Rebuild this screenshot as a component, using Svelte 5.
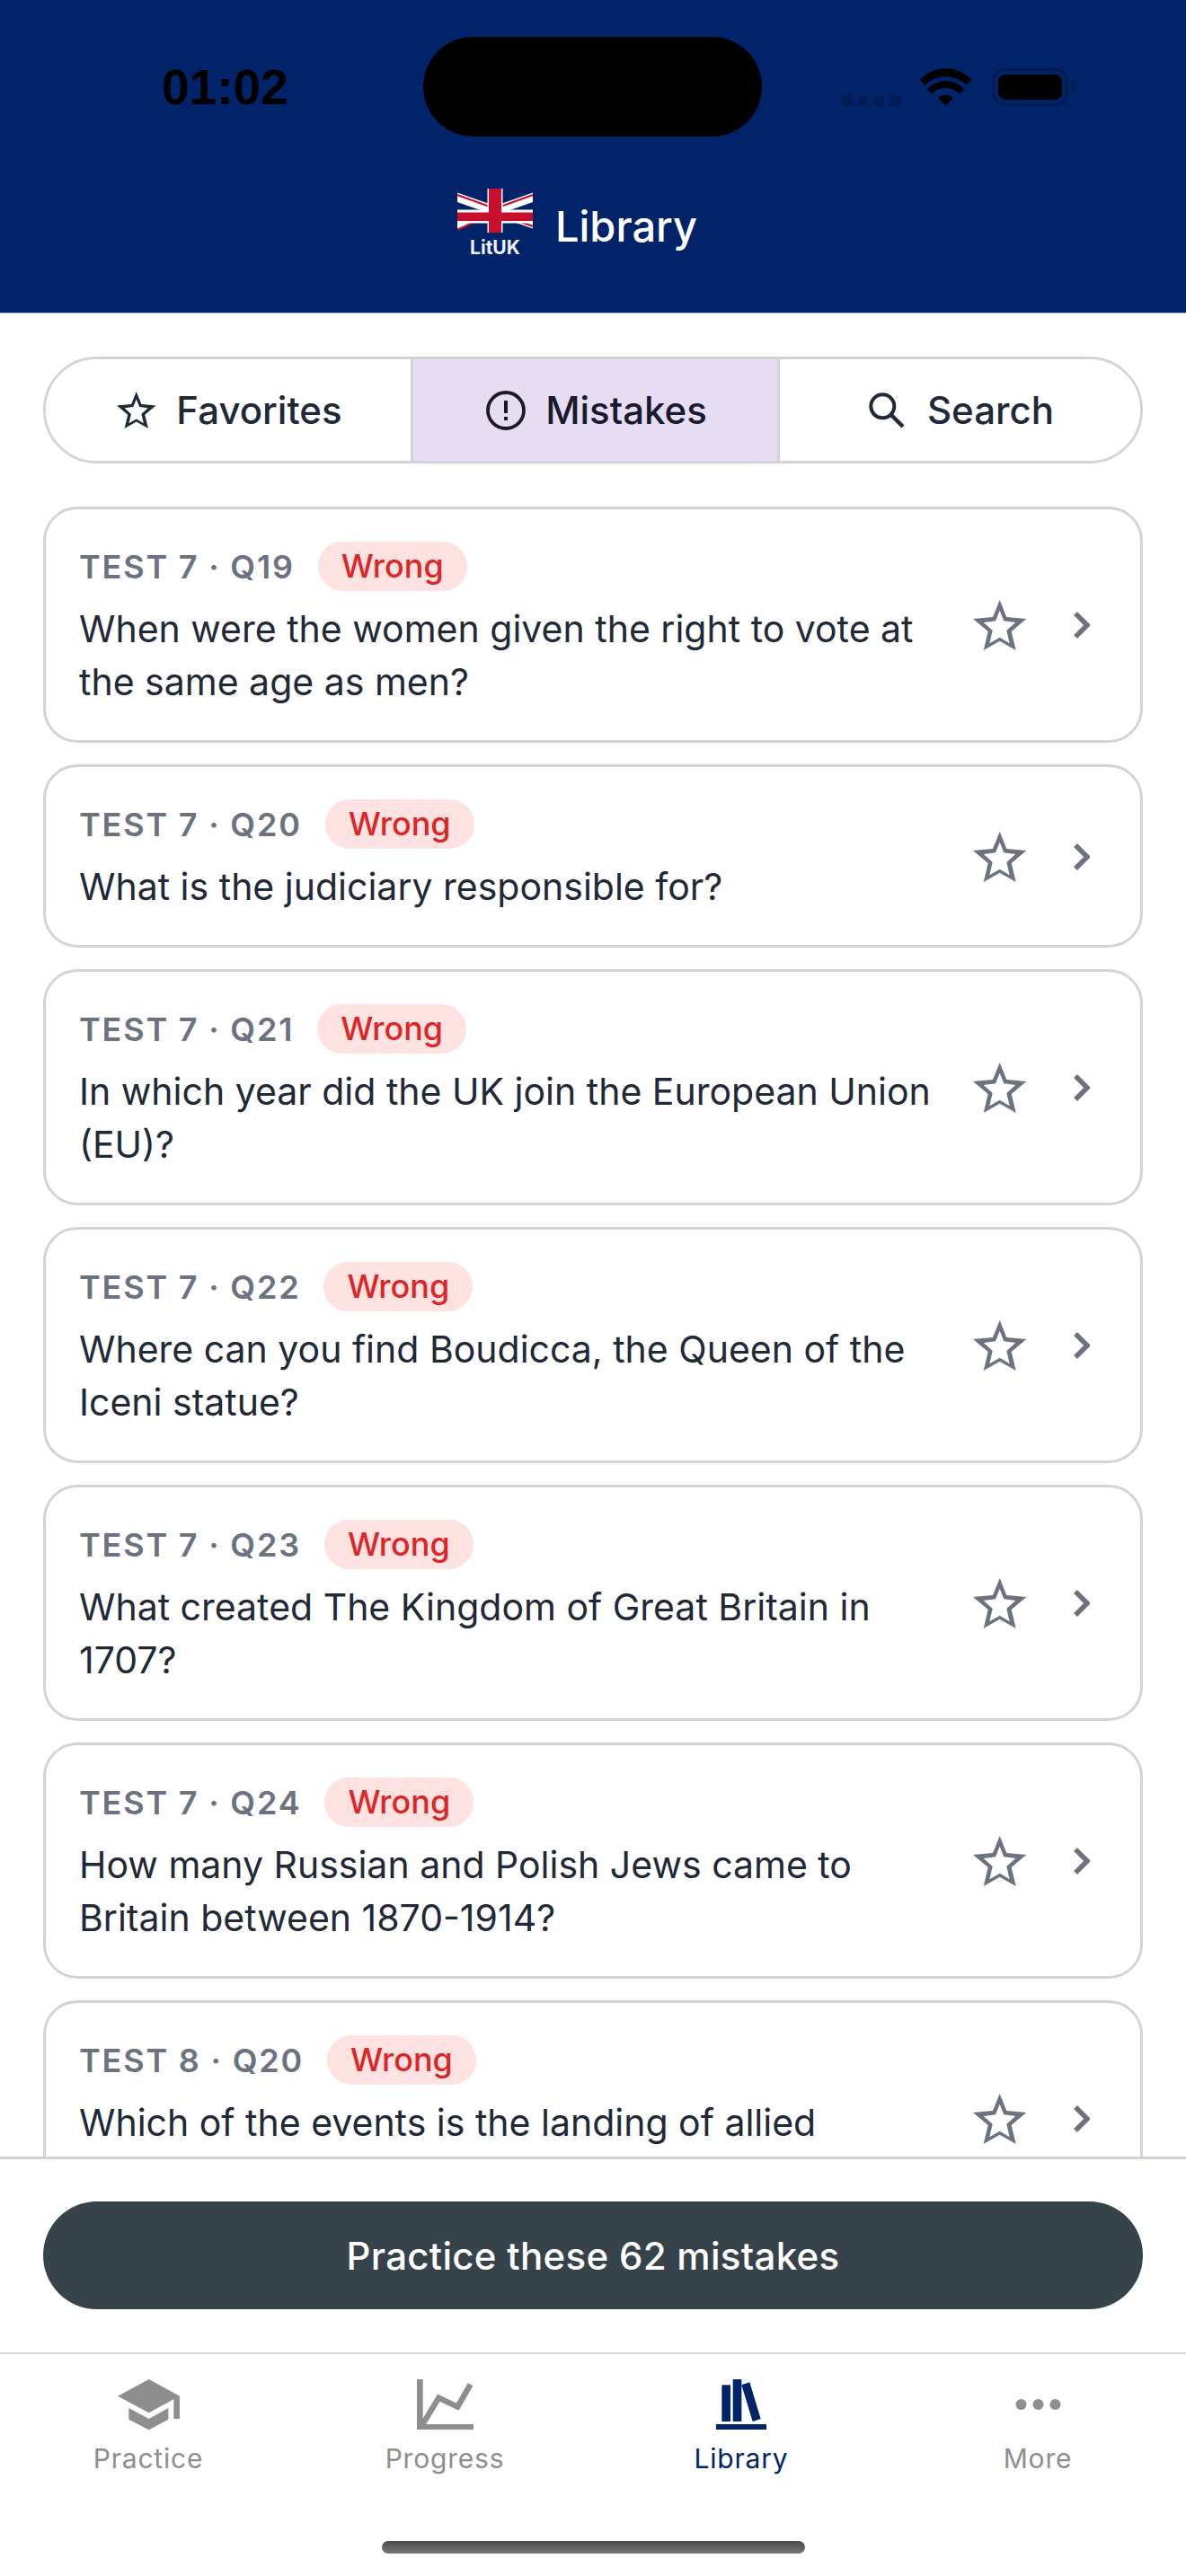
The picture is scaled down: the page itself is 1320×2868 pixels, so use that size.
<script lang="ts">
  type Item = { label: string; text: string };

  const items: Item[] = [
    { label: 'TEST 7 · Q19', text: 'When were the women given the right to vote at the same age as men?' },
    { label: 'TEST 7 · Q20', text: 'What is the judiciary responsible for?' },
    { label: 'TEST 7 · Q21', text: 'In which year did the UK join the European Union (EU)?' },
    { label: 'TEST 7 · Q22', text: 'Where can you find Boudicca, the Queen of the Iceni statue?' },
    { label: 'TEST 7 · Q23', text: 'What created The Kingdom of Great Britain in 1707?' },
    { label: 'TEST 7 · Q24', text: 'How many Russian and Polish Jews came to Britain between 1870-1914?' },
    { label: 'TEST 8 · Q20', text: 'Which of the events is the landing of allied' }
  ];

  const star =
    'M29.700 0 37.300 19 59.300 21 42.700 35 47.700 56 29.700 45.700 11.700 56 16.700 35 0 21 22 19z' +
    'M29.700 11.700 25 23.300 11.700 25 21.700 34 18.300 48.300 29.700 41.700 40.700 48.300 37.300 34 47.300 25 34.300 23.300z';
</script>

<div class="screen">
  <header class="header">
    <div class="status">
      <span class="time">01:02</span>
      <div class="island"></div>
      <div class="status-icons">
        <div class="signal"><i></i><i></i><i></i><i></i></div>
        <svg class="wifi" viewBox="0 0 57 42" width="57" height="42">
          <path d="M0 13A38 38 0 0 1 57 13L52 19A33 33 0 0 0 5 19z" fill="#000" />
          <path d="M8 23A28 28 0 0 1 49 23L44 29A20 20 0 0 0 13 29z" fill="#000" />
          <path d="M20 33A13 13 0 0 1 37 33L28.500 42z" fill="#000" />
        </svg>
        <div class="battery"><div class="battery-fill"></div></div>
        <div class="battery-nub"></div>
      </div>
    </div>
    <div class="title-row">
      <div class="logo">
        <svg viewBox="0 0 84 49" width="84" height="49">
          <defs><clipPath id="flag"><rect width="84" height="49" /></clipPath></defs>
          <g clip-path="url(#flag)">
            <path d="M-2 9 86 40M-2 40 86 9" stroke="#fff" stroke-width="10" />
            <path d="M0 7 36 20M84 7 48 20M0 46 36 29M84 42 48 29" stroke="#c8102e" stroke-width="2.200" />
            <rect x="0" y="23.500" width="84" height="15" fill="#fff" />
            <rect x="33.500" y="0" width="17" height="49" fill="#fff" />
            <rect x="35" y="0" width="14" height="49" fill="#c8102e" />
            <rect x="0" y="26.500" width="84" height="9.500" fill="#c8102e" />
          </g>
        </svg>
        <span class="logo-text">LitUK</span>
      </div>
      <h1>Library</h1>
    </div>
  </header>

  <main class="content">
    <div class="segments">
      <button class="segment">
        <svg viewBox="0 0 60 56" width="44" height="41"><path d={star} fill="#1f2937" fill-rule="evenodd" /></svg>
        <span>Favorites</span>
      </button>
      <button class="segment active">
        <svg viewBox="0 0 44 44" width="44" height="44"><circle cx="22" cy="22" r="20" fill="none" stroke="#1a1a2e" stroke-width="3.800" /><rect x="20" y="11" width="4" height="14" fill="#1a1a2e" /><rect x="20" y="29" width="4" height="4" fill="#1a1a2e" /></svg>
        <span>Mistakes</span>
      </button>
      <button class="segment search">
        <svg viewBox="0 0 40 40" width="40" height="40"><circle cx="15.300" cy="15.300" r="13" fill="none" stroke="#1f2937" stroke-width="4" /><path d="M25 25 38 38" stroke="#1f2937" stroke-width="4.500" /></svg>
        <span>Search</span>
      </button>
    </div>

    <div class="list">
      {#each items as item}
        <article class="card">
          <div class="card-body">
            <div class="meta">
              <span class="label">{item.label}</span>
              <span class="pill">Wrong</span>
            </div>
            <p>{item.text}</p>
          </div>
          <div class="card-actions">
            <svg viewBox="0 0 60 56" width="60" height="56"><path d={star} fill="#6b7280" fill-rule="evenodd" /></svg>
            <svg class="chevron" viewBox="0 0 18 30" width="18" height="30"><path d="M2 2 15 15 2 28" fill="none" stroke="#6b7280" stroke-width="5.500" /></svg>
          </div>
        </article>
      {/each}
    </div>
  </main>

  <div class="footer">
    <button class="practice">Practice these 62 mistakes</button>
  </div>

  <nav class="tabs">
    <div class="tab">
      <svg viewBox="153 86 207 169" width="69" height="56.300">
        <path d="M153 142 257 86 360 142V218H340V153L257 198z" fill="#8e8e8e" />
        <path d="M190 182 257 218 322 182V220L257 255 190 220z" fill="#8e8e8e" />
      </svg>
      <span>Practice</span>
    </div>
    <div class="tab">
      <svg viewBox="1152 86 189 169" width="63" height="56.300">
        <path d="M1152 86H1172V236H1341V255H1152z" fill="#8e8e8e" />
        <path d="M1172 235 1225 148 1288 178 1331 103" fill="none" stroke="#8e8e8e" stroke-width="19" />
      </svg>
      <span>Progress</span>
    </div>
    <div class="tab current">
      <svg viewBox="112 86 170 169" width="56.700" height="56.300">
        <rect x="131" y="105" width="29" height="122" fill="#00236a" />
        <rect x="168" y="86" width="29" height="141" fill="#00236a" />
        <path d="M197 105 224 96 261 218 234 227z" fill="#00236a" />
        <rect x="112" y="236" width="170" height="19" fill="#00236a" />
      </svg>
      <span>Library</span>
    </div>
    <div class="tab">
      <svg viewBox="0 0 57 56.300" width="57" height="56.300">
        <circle cx="9.500" cy="28" r="6" fill="#8e8e8e" />
        <circle cx="28.500" cy="28" r="6" fill="#8e8e8e" />
        <circle cx="47.500" cy="28" r="6" fill="#8e8e8e" />
      </svg>
      <span>More</span>
    </div>
  </nav>

  <div class="home-row"><div class="home-bar"></div></div>
</div>

<style>
  :global(body) {
    font-family: 'Inter', 'Liberation Sans', sans-serif;
    background: #fff;
  }
  .screen {
    width: 1320px;
    height: 2868px;
    display: flex;
    flex-direction: column;
    overflow: hidden;
    background: #fff;
  }
  .header {
    height: 348px;
    flex: none;
    background: #00236a;
    border-bottom: 1px solid #b5b8bd;
    box-sizing: content-box;
  }
  .status {
    display: grid;
    grid-template-columns: 471px 377px 1fr;
    padding-top: 41px;
    align-items: center;
  }
  .time {
    padding-left: 180px;
    font-family: 'Liberation Sans', sans-serif;
    font-weight: 700;
    font-size: 55px;
    line-height: 60px;
    color: #000;
  }
  .island {
    height: 111px;
    border-radius: 56px;
    background: #000;
  }
  .status-icons {
    display: flex;
    align-items: center;
    padding-left: 89px;
  }
  .signal {
    display: flex;
    gap: 7px;
    align-self: flex-end;
    margin-right: 22px;
  }
  .signal i {
    width: 11px;
    height: 11px;
    border-radius: 3px;
    background: #001a52;
  }
  .wifi {
    margin-right: 23px;
  }
  .battery {
    width: 85px;
    height: 42px;
    box-sizing: border-box;
    border: 3px solid #001a52;
    border-radius: 14px;
    padding: 4px;
  }
  .battery-fill {
    height: 100%;
    border-radius: 8px;
    background: #000;
  }
  .battery-nub {
    width: 5px;
    height: 13px;
    margin-left: 3px;
    border-radius: 0 4px 4px 0;
    background: #001a52;
  }
  .title-row {
    display: flex;
    align-items: center;
    justify-content: center;
    gap: 25px;
    margin-top: 58px;
    padding-right: 35px;
  }
  .logo {
    display: flex;
    flex-direction: column;
    align-items: center;
  }
  .logo svg {
    display: block;
  }
  .logo-text {
    margin-top: 5px;
    font-size: 21px;
    line-height: 24px;
    font-weight: 700;
    color: #eef0f5;
  }
  h1 {
    margin: 6px 0 0;
    font-size: 47px;
    line-height: 56px;
    font-weight: 500;
    color: #fff;
  }
  .content {
    flex: 1;
    min-height: 0;
    overflow: hidden;
    padding: 48px 48px 0;
  }
  .segments {
    display: grid;
    grid-template-columns: 406px 408px 1fr;
    height: 119px;
    box-sizing: border-box;
    border: 3px solid #d1d5db;
    border-radius: 60px;
    overflow: hidden;
  }
  .segment {
    display: flex;
    align-items: center;
    justify-content: center;
    gap: 22px;
    border: 0;
    padding: 0 0 0 3px;
    background: #fff;
    font-family: inherit;
    font-size: 42px;
    font-weight: 500;
    color: #1f2937;
  }
  .segment + .segment {
    border-left: 3px solid #d1d5db;
  }
  .search {
    gap: 25px;
  }
  .active {
    background: #e6ddf5;
    color: #1a1a2e;
  }
  .list {
    display: flex;
    flex-direction: column;
    gap: 24px;
    margin-top: 48px;
  }
  .card {
    display: flex;
    align-items: center;
    gap: 32px;
    box-sizing: border-box;
    border: 3px solid #d1d5db;
    border-radius: 38px;
    padding: 36px 56px 35px 37px;
  }
  /* last card runs under the footer, its second line is never seen */
  .card:last-child {
    min-height: 263px;
  }
  .card:last-child .card-body {
    align-self: flex-start;
  }
  .card-body {
    flex: 1;
    min-width: 0;
  }
  .meta {
    display: flex;
    align-items: center;
    gap: 26px;
  }
  .label {
    font-size: 36px;
    font-weight: 600;
    letter-spacing: 1.800px;
    color: #6b7280;
  }
  .pill {
    height: 55px;
    line-height: 55px;
    padding: 0 26px;
    border-radius: 28px;
    background: #fee2e2;
    color: #dc2626;
    font-size: 36px;
    font-weight: 500;
  }
  p {
    margin: 13px 0 0;
    font-size: 41px;
    line-height: 59px;
    color: #1f2937;
  }
  .card-actions {
    display: flex;
    align-items: center;
    gap: 52px;
    flex: none;
  }
  .footer {
    flex: none;
    height: 218px;
    box-sizing: border-box;
    border-top: 3px solid #d1d5db;
    padding: 47px 48px 0;
    background: #fff;
  }
  .practice {
    display: block;
    width: 100%;
    height: 120px;
    border: 0;
    border-radius: 60px;
    background: #37434a;
    color: #fff;
    font-family: inherit;
    font-size: 42px;
    font-weight: 500;
    letter-spacing: 0.300px;
  }
  .tabs {
    flex: none;
    display: grid;
    grid-template-columns: repeat(4, 1fr);
    height: 209px;
    box-sizing: border-box;
    border-top: 2px solid #d8dadd;
    padding-top: 28px;
    background: #fff;
  }
  .tab {
    display: flex;
    flex-direction: column;
    align-items: center;
    color: #8e8e8e;
  }
  .tab span {
    margin-top: 12px;
    font-size: 30px;
    line-height: 40px;
    font-weight: 400;
    letter-spacing: 0.800px;
  }
  .current {
    color: #00236a;
  }
  .home-row {
    flex: none;
    display: flex;
    justify-content: center;
    height: 59px;
    padding-top: 20px;
    box-sizing: border-box;
    margin-top: -19px;
  }
  .home-bar {
    width: 471px;
    height: 14px;
    border-radius: 7px;
    background: linear-gradient(#4a4a4a, #777);
  }
</style>
